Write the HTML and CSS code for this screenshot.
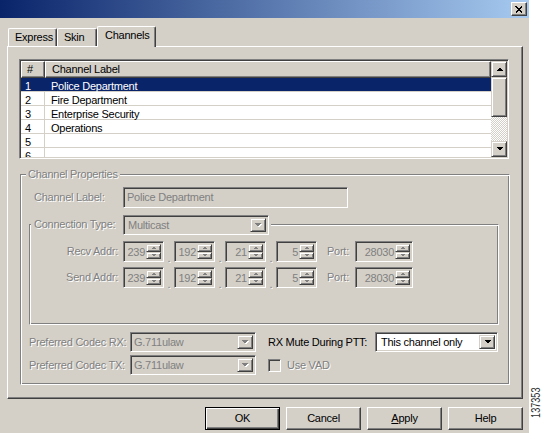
FILE: index.html
```html
<!DOCTYPE html>
<html>
<head>
<meta charset="utf-8">
<title>Channels</title>
<link rel="stylesheet" href="styles.css">
</head>
<body>
<div class="screen">
  <div class="window">
    <div class="titlebar">
      <div class="close">
        <svg width="8" height="7" viewBox="0 0 8 7"><path d="M0.6 0.4L7.4 6.6M7.4 0.4L0.6 6.6" stroke="#000" stroke-width="1.7" fill="none"/></svg>
      </div>
    </div>
    <div class="content">
      <div class="tabs">
        <div class="tab t-express">Express</div>
        <div class="tab t-skin">Skin</div>
        <div class="tab t-channels">Channels</div>
      </div>
      <div class="panel">
        <div class="listview">
          <div class="lv-main">
            <div class="lv-header">
              <div class="hcell h-num">#</div>
              <div class="hcell h-label">Channel Label</div>
            </div>
            <div class="lv-row sel"><div class="c-num">1</div><div class="c-label">Police Department</div></div>
            <div class="lv-row"><div class="c-num">2</div><div class="c-label">Fire Department</div></div>
            <div class="lv-row"><div class="c-num">3</div><div class="c-label">Enterprise Security</div></div>
            <div class="lv-row"><div class="c-num">4</div><div class="c-label">Operations</div></div>
            <div class="lv-row"><div class="c-num">5</div><div class="c-label"></div></div>
            <div class="lv-row"><div class="c-num">6</div><div class="c-label"></div></div>
          </div>
          <div class="vscroll">
            <div class="sbtn"><svg width="7" height="4" viewBox="0 0 7 4"><path d="M0 4H7L3.5 0.5Z" fill="#000"/></svg></div>
            <div class="thumb"></div>
            <div class="track"></div>
            <div class="sbtn"><svg width="7" height="4" viewBox="0 0 7 4"><path d="M0 0H7L3.5 3.5Z" fill="#000"/></svg></div>
          </div>
        </div>

        <div class="group props">
          <div class="legend dis">Channel Properties</div>
          <div class="field-row">
            <div class="lbl-col dis">Channel Label:</div>
            <div class="edit sunken">Police Department</div>
          </div>

          <div class="group conn">
            <div class="legend legend-conn">
              <div class="conn-lbl dis">Connection Type:</div>
              <div class="combo sunken conn-combo">
                <div class="combo-text">Multicast</div>
                <div class="combo-btn raised"><svg width="8" height="5" viewBox="0 0 8 5"><path d="M1 1H8L4.5 4.5Z" fill="#fff"/><path d="M0 0H7L3.5 3.5Z" fill="#808080"/></svg></div>
              </div>
            </div>

            <div class="addr first">
              <div class="addr-lbl dis">Recv Addr:</div>
              <div class="spin sunken"><div class="spin-val">239</div><div class="spin-btns"><div class="raised"><svg width="5" height="3" viewBox="0 0 5 3"><path d="M0 3H5L2.5 0.5Z" fill="#808080"/></svg></div><div class="raised"><svg width="5" height="3" viewBox="0 0 5 3"><path d="M0 0H5L2.5 2.5Z" fill="#808080"/></svg></div></div></div>
              <div class="dot">.</div>
              <div class="spin sunken"><div class="spin-val">192</div><div class="spin-btns"><div class="raised"><svg width="5" height="3" viewBox="0 0 5 3"><path d="M0 3H5L2.5 0.5Z" fill="#808080"/></svg></div><div class="raised"><svg width="5" height="3" viewBox="0 0 5 3"><path d="M0 0H5L2.5 2.5Z" fill="#808080"/></svg></div></div></div>
              <div class="dot">.</div>
              <div class="spin sunken"><div class="spin-val">21</div><div class="spin-btns"><div class="raised"><svg width="5" height="3" viewBox="0 0 5 3"><path d="M0 3H5L2.5 0.5Z" fill="#808080"/></svg></div><div class="raised"><svg width="5" height="3" viewBox="0 0 5 3"><path d="M0 0H5L2.5 2.5Z" fill="#808080"/></svg></div></div></div>
              <div class="dot">.</div>
              <div class="spin sunken"><div class="spin-val">5</div><div class="spin-btns"><div class="raised"><svg width="5" height="3" viewBox="0 0 5 3"><path d="M0 3H5L2.5 0.5Z" fill="#808080"/></svg></div><div class="raised"><svg width="5" height="3" viewBox="0 0 5 3"><path d="M0 0H5L2.5 2.5Z" fill="#808080"/></svg></div></div></div>
              <div class="port-lbl dis">Port:</div>
              <div class="spin sunken port"><div class="spin-val">28030</div><div class="spin-btns"><div class="raised"><svg width="5" height="3" viewBox="0 0 5 3"><path d="M0 3H5L2.5 0.5Z" fill="#808080"/></svg></div><div class="raised"><svg width="5" height="3" viewBox="0 0 5 3"><path d="M0 0H5L2.5 2.5Z" fill="#808080"/></svg></div></div></div>
            </div>

            <div class="addr second">
              <div class="addr-lbl dis">Send Addr:</div>
              <div class="spin sunken"><div class="spin-val">239</div><div class="spin-btns"><div class="raised"><svg width="5" height="3" viewBox="0 0 5 3"><path d="M0 3H5L2.5 0.5Z" fill="#808080"/></svg></div><div class="raised"><svg width="5" height="3" viewBox="0 0 5 3"><path d="M0 0H5L2.5 2.5Z" fill="#808080"/></svg></div></div></div>
              <div class="dot">.</div>
              <div class="spin sunken"><div class="spin-val">192</div><div class="spin-btns"><div class="raised"><svg width="5" height="3" viewBox="0 0 5 3"><path d="M0 3H5L2.5 0.5Z" fill="#808080"/></svg></div><div class="raised"><svg width="5" height="3" viewBox="0 0 5 3"><path d="M0 0H5L2.5 2.5Z" fill="#808080"/></svg></div></div></div>
              <div class="dot">.</div>
              <div class="spin sunken"><div class="spin-val">21</div><div class="spin-btns"><div class="raised"><svg width="5" height="3" viewBox="0 0 5 3"><path d="M0 3H5L2.5 0.5Z" fill="#808080"/></svg></div><div class="raised"><svg width="5" height="3" viewBox="0 0 5 3"><path d="M0 0H5L2.5 2.5Z" fill="#808080"/></svg></div></div></div>
              <div class="dot">.</div>
              <div class="spin sunken"><div class="spin-val">5</div><div class="spin-btns"><div class="raised"><svg width="5" height="3" viewBox="0 0 5 3"><path d="M0 3H5L2.5 0.5Z" fill="#808080"/></svg></div><div class="raised"><svg width="5" height="3" viewBox="0 0 5 3"><path d="M0 0H5L2.5 2.5Z" fill="#808080"/></svg></div></div></div>
              <div class="port-lbl dis">Port:</div>
              <div class="spin sunken port"><div class="spin-val">28030</div><div class="spin-btns"><div class="raised"><svg width="5" height="3" viewBox="0 0 5 3"><path d="M0 3H5L2.5 0.5Z" fill="#808080"/></svg></div><div class="raised"><svg width="5" height="3" viewBox="0 0 5 3"><path d="M0 0H5L2.5 2.5Z" fill="#808080"/></svg></div></div></div>
            </div>
          </div>

          <div class="codec">
            <div class="codec-lbl dis">Preferred Codec RX:</div>
            <div class="combo sunken">
              <div class="combo-text">G.711ulaw</div>
              <div class="combo-btn raised"><svg width="8" height="5" viewBox="0 0 8 5"><path d="M1 1H8L4.5 4.5Z" fill="#fff"/><path d="M0 0H7L3.5 3.5Z" fill="#808080"/></svg></div>
            </div>
            <div></div>
            <div class="mute-lbl">RX Mute During PTT:</div>
            <div class="combo sunken active">
              <div class="combo-text">This channel only</div>
              <div class="combo-btn raised"><svg width="7" height="4" viewBox="0 0 7 4"><path d="M0 0H7L3.5 3.5Z" fill="#000"/></svg></div>
            </div>

            <div class="codec-lbl dis">Preferred Codec TX:</div>
            <div class="combo sunken">
              <div class="combo-text">G.711ulaw</div>
              <div class="combo-btn raised"><svg width="8" height="5" viewBox="0 0 8 5"><path d="M1 1H8L4.5 4.5Z" fill="#fff"/><path d="M0 0H7L3.5 3.5Z" fill="#808080"/></svg></div>
            </div>
            <div></div>
            <div class="vad">
              <div class="chk sunken"></div>
              <div class="dis">Use VAD</div>
            </div>
          </div>
        </div>
      </div>
      <div class="buttons">
        <div class="btn default">OK</div>
        <div class="btn">Cancel</div>
        <div class="btn"><u>A</u>pply</div>
        <div class="btn">Help</div>
      </div>
    </div>
  </div>
  <div class="side"><span class="fignum">137353</span></div>
</div>
</body>
</html>
```
FILE: styles.css
```css
* { box-sizing: border-box; }
html, body { margin: 0; padding: 0; }
body {
  background: #fff;
  font-family: "Liberation Sans", Arial, sans-serif;
  font-size: 11px;
  letter-spacing: -0.25px;
  color: #000;
}
svg { display: block; shape-rendering: crispEdges; }

.screen { display: flex; width: 543px; height: 433px; overflow: hidden; }
.window {
  width: 529px;
  height: 433px;
  background: #d4d0c8;
  display: flex;
  flex-direction: column;
}

/* generic 3D styles */
.raised {
  background: #d4d0c8;
  border: 1px solid;
  border-color: #d4d0c8 #404040 #404040 #d4d0c8;
  box-shadow: inset 1px 1px #fff, inset -1px -1px #808080;
}
.sunken {
  border: 1px solid;
  border-color: #808080 #fff #fff #808080;
  box-shadow: inset 1px 1px #404040, inset -1px -1px #d4d0c8;
}
.dis { color: #808080; text-shadow: 1px 1px 0 #fff; }

/* title bar */
.titlebar {
  height: 18px;
  flex: none;
  background: linear-gradient(to right, #0a246a, #a6caf0);
  display: flex;
  justify-content: flex-end;
  align-items: flex-start;
  padding: 2px 2px 0 0;
}
.close {
  width: 16px;
  height: 14px;
  background: #d4d0c8;
  border: 1px solid;
  border-color: #fff #404040 #404040 #fff;
  box-shadow: inset -1px -1px #808080;
  display: flex;
  align-items: center;
  justify-content: center;
}

.content { padding: 8px 6px 0 7px; }

/* tabs */
.tabs {
  display: flex;
  align-items: flex-end;
  height: 20px;
  padding-left: 1px;
}
.tab {
  height: 18px;
  background: #d4d0c8;
  border-top: 1px solid #fff;
  border-left: 1px solid #fff;
  border-right: 1px solid #404040;
  box-shadow: inset -1px 0 #808080;
  border-radius: 2px 2px 0 0;
  line-height: 17px;
  white-space: nowrap;
}
.t-express { width: 49px; padding-left: 6px; }
.t-skin { width: 40px; padding-left: 6px; }
.t-channels {
  width: 59px;
  height: 21px;
  margin-bottom: -1px;
  padding-left: 7px;
  line-height: 16px;
  position: relative;
  z-index: 1;
}

/* tab panel */
.panel {
  height: 353px;
  border: 1px solid;
  border-color: #fff #404040 #404040 #fff;
  box-shadow: inset -1px -1px #808080;
  padding: 12px 0 0 11px;
}

/* list view */
.listview {
  width: 490px;
  height: 100px;
  display: flex;
  background: #fff;
  padding: 1px;
  border: 1px solid;
  border-color: #808080 #fff #fff #808080;
  box-shadow: inset 1px 1px #404040, inset -1px -1px #d4d0c8;
}
.lv-main { flex: 1; display: flex; flex-direction: column; overflow: hidden; }
.lv-header { display: flex; height: 17px; flex: none; }
.hcell {
  height: 17px;
  background: #d4d0c8;
  border: 1px solid;
  border-color: #fff #404040 #404040 #fff;
  box-shadow: inset -1px -1px #808080;
  line-height: 14px;
}
.h-num { width: 24px; padding-left: 5px; }
.h-label { flex: 1; padding-left: 6px; }
.lv-row {
  display: flex;
  height: 14px;
  flex: none;
  border-bottom: 1px solid #d4d0c8;
  padding-top: 1px;
  line-height: 14px;
}
.lv-row .c-num { width: 24px; padding-left: 4px; border-right: 1px solid #d4d0c8; margin-top: -1px; padding-top: 1px; }
.lv-row .c-label { flex: 1; padding-left: 6px; }
.lv-row.sel { background: #0a246a; color: #fff; }
.lv-row.sel .c-num { border-right-color: #0a246a; }

.vscroll { width: 16px; display: flex; flex-direction: column; }
.sbtn {
  height: 16px;
  flex: none;
  background: #d4d0c8;
  border: 1px solid;
  border-color: #d4d0c8 #404040 #404040 #d4d0c8;
  box-shadow: inset 1px 1px #fff, inset -1px -1px #808080;
  display: flex;
  align-items: center;
  justify-content: center;
}
.thumb {
  height: 40px;
  flex: none;
  background: #d4d0c8;
  border: 1px solid;
  border-color: #d4d0c8 #404040 #404040 #d4d0c8;
  box-shadow: inset 1px 1px #fff, inset -1px -1px #808080;
}
.track {
  flex: 1;
  background: repeating-conic-gradient(#d4d0c8 0 25%, #fff 0 50%) 0 0 / 2px 2px;
}

/* group boxes */
.group {
  border: 1px solid;
  border-color: #808080 #fff #fff #808080;
  box-shadow: inset 1px 1px #fff, inset -1px -1px #808080;
}
.legend {
  width: fit-content;
  background: #d4d0c8;
}
.props {
  width: 490px;
  margin: 15px 0 0 1px;
  padding: 0 10px 9px 8px;
}
.props > .legend {
  height: 13px;
  line-height: 13px;
  margin: -7px 0 0 -3px;
  padding: 0 2px;
}
.field-row {
  display: flex;
  height: 21px;
  margin-top: 6px;
}
.lbl-col { width: 94px; padding-left: 5px; line-height: 21px; }
.edit {
  width: 225px;
  height: 21px;
  background: #d4d0c8;
  color: #808080;
  padding-left: 3px;
  line-height: 19px;
}

.conn {
  margin-top: 16px;
  padding: 0 0 36px 0;
}
.legend-conn {
  display: flex;
  height: 19px;
  margin: -10px 0 0 1px;
  padding: 0 2px 0 3px;
}
.conn-lbl { width: 89px; line-height: 19px; }
.conn-combo { width: 146px; height: 19px; }

/* combos */
.combo {
  display: flex;
  background: #d4d0c8;
  padding: 2px;
  height: 20px;
}
.combo-text {
  flex: 1;
  color: #808080;
  padding-left: 1px;
  line-height: 15px;
  white-space: nowrap;
  overflow: hidden;
}
.conn-combo .combo-text { padding-left: 2px; line-height: 14px; }
.combo-btn {
  width: 16px;
  flex: none;
  display: flex;
  align-items: center;
  justify-content: center;
}
.combo.active { background: #fff; }
.combo.active .combo-text { color: #000; padding-left: 3px; }

/* address rows */
.addr { display: flex; height: 21px; }
.addr.first { margin-top: 7px; }
.addr.second { margin-top: 5px; }
.addr-lbl { width: 93px; text-align: right; padding-right: 5px; line-height: 21px; }
.spin {
  width: 41px;
  height: 21px;
  display: flex;
  background: #d4d0c8;
  padding: 2px;
}
.spin.port { width: 58px; }
.spin-val {
  flex: 1;
  text-align: right;
  color: #808080;
  line-height: 16px;
  padding-right: 1px;
}
.spin-btns { width: 15px; display: flex; flex-direction: column; }
.spin-btns > div {
  flex: 1;
  display: flex;
  align-items: center;
  justify-content: center;
}
.dot {
  width: 10px;
  text-align: center;
  color: #808080;
  text-shadow: 1px 1px 0 #fff;
  line-height: 8px;
  align-self: flex-end;
}
.port-lbl { margin: 0 4px 0 10px; width: 24px; line-height: 21px; }

/* codec area */
.codec {
  margin-top: 7px;
  display: grid;
  grid-template-columns: 101px 126px 12px 107px 123px;
  grid-template-rows: 20px 20px;
  row-gap: 3px;
}
.codec-lbl { line-height: 20px; white-space: nowrap; }
.mute-lbl { line-height: 21px; white-space: nowrap; }
.vad { display: flex; align-items: center; gap: 6px; grid-column: 4 / span 2; }
.chk { width: 13px; height: 13px; background: #d4d0c8; }

/* dialog buttons */
.buttons {
  display: flex;
  justify-content: flex-end;
  gap: 6px;
  margin-top: 8px;
}
.btn {
  width: 75px;
  height: 23px;
  background: #d4d0c8;
  border: 1px solid;
  border-color: #fff #404040 #404040 #fff;
  box-shadow: inset -1px -1px #808080;
  text-align: center;
  line-height: 20px;
}
.btn.default {
  border-color: #000;
  box-shadow: inset 1px 1px #fff, inset -1px -1px #404040, inset -2px -2px #808080;
}

/* figure number */
.side {
  width: 14px;
  display: flex;
  flex-direction: column;
  justify-content: flex-end;
  align-items: center;
  padding-bottom: 9px;
}
.fignum {
  writing-mode: vertical-rl;
  transform: rotate(180deg) scaleY(0.7);
  font-size: 13px;
  letter-spacing: 0;
  color: #333;
  line-height: 12px;
}
```
